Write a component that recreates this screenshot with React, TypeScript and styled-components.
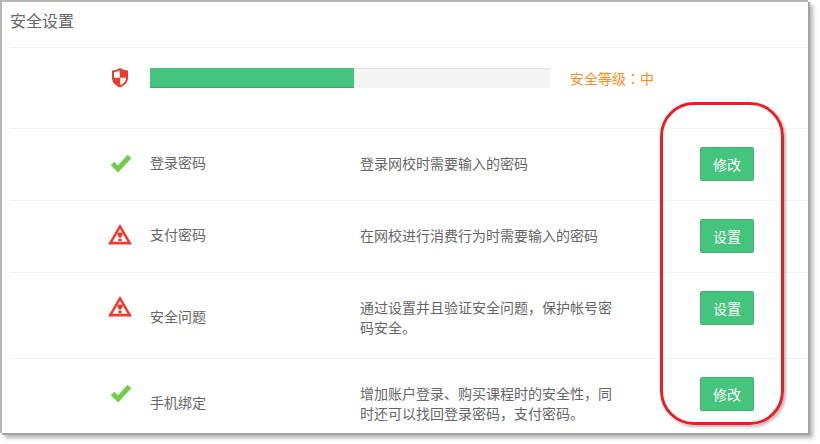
import React from 'react';
import styled, { createGlobalStyle } from 'styled-components';

const GlobalStyle = createGlobalStyle`
  html, body {
    margin: 0;
    padding: 0;
    background: #fff;
    overflow: hidden;
  }
  body {
    font-family: "Noto Sans CJK SC", "Liberation Sans", sans-serif;
  }
`;

const Screen = styled.div`
  position: relative;
  width: 820px;
  height: 444px;
  overflow: hidden;
  background: #fff;
`;

const Panel = styled.section`
  box-sizing: border-box;
  width: 808px;
  height: 433px;
  overflow: hidden;
  background: #fff;
  border-top: 2px solid #b8b5b5;
  border-left: 2px solid #b8b5b5;
  box-shadow: 2px 2px 0 #a3a3a3, 5px 5px 4px #b5b5b5;
  padding-left: 8px;
`;

const Title = styled.h2`
  margin: 0;
  height: 45px;
  line-height: 37px;
  font-size: 16px;
  font-weight: 400;
  color: #666;
  border-bottom: 1px solid #f2f2f2;
`;

const LevelRow = styled.div`
  display: flex;
  align-items: flex-start;
  height: 81px;
  padding-top: 20px;
  box-sizing: border-box;
  border-bottom: 1px solid #f2f2f2;
`;

const IconCell = styled.div<{ $top?: number }>`
  flex: none;
  width: 140px;
  padding-left: 97px;
  padding-top: ${({ $top }) => $top ?? 23}px;
  box-sizing: border-box;
  display: flex;
`;

const Progress = styled.div`
  width: 400px;
  height: 20px;
  background: #f4f4f4;
  box-shadow: inset 0 1px 1px #e2e2e2;
`;

const ProgressFill = styled.div`
  height: 100%;
  box-sizing: border-box;
  background: #44c47c;
  border-bottom: 1px solid #3aa76a;
`;

const LevelText = styled.span`
  margin-left: 20px;
  font-size: 14px;
  line-height: 20px;
  color: #ff8c1a;
`;

const Row = styled.div<{ $height: number }>`
  display: flex;
  align-items: flex-start;
  height: ${({ $height }) => $height}px;
  box-sizing: border-box;
  border-bottom: 1px solid #f2f2f2;
`;

const Name = styled.div<{ $top: number }>`
  flex: none;
  width: 210px;
  padding-top: ${({ $top }) => $top}px;
  font-size: 14px;
  line-height: 20px;
  color: #666;
`;

const Description = styled.div`
  flex: none;
  width: 260px;
  padding-top: 24px;
  font-size: 14px;
  line-height: 20px;
  color: #666;
`;

const Punct = styled.span`
  font-family: "Noto Sans CJK KR", sans-serif;
`;

const ActionButton = styled.button`
  flex: none;
  margin: 18px 0 0 80px;
  width: 54px;
  height: 34px;
  padding: 0;
  font: inherit;
  font-size: 14px;
  color: #fff;
  background: #44c47c;
  border: 1px solid #3db46f;
  border-radius: 2px;
`;

const Highlight = styled.div`
  position: absolute;
  left: 660px;
  top: 102px;
  width: 124px;
  height: 323px;
  box-sizing: border-box;
  border: 3px solid #ee1c25;
  border-radius: 34px;
  box-shadow: 2px 2px 3px rgba(0, 0, 0, 0.28);
`;

const Shield = () => (
  <svg width="26" height="20" viewBox="0 0 26 20">
    <path d="M5 2.500C8 2.300 10.500 1.500 13 0c2.500 1.500 5 2.300 8 2.500V10c0 4.500-3.500 7.500-8 9.500C8.500 17.500 5 14.500 5 10z" fill="#ee3a2c" />
    <path d="M7 4.200C9 4 11 3.400 12.800 2.500v7.300H7zM13.200 9.800H19V10c0 3.400-2.500 5.700-5.800 7.300z" fill="#fff" />
  </svg>
);

const Check = () => (
  <svg width="26" height="22" viewBox="0 0 26 22">
    <path d="M5.500 11.500 11 17 22.500 4.500" fill="none" stroke="#6fcf4b" strokeWidth="5" />
  </svg>
);

const Warning = () => (
  <svg width="26" height="22" viewBox="0 0 26 22">
    <path d="M13 0 25 20.500H1z" fill="#ee3a2c" />
    <path d="M13 5 20.500 17.800H5.500z" fill="#fff" />
    <path d="M10 8.500h6l-1.600 5h-2.800z" fill="#ee3a2c" />
    <rect x="11.500" y="14.500" width="3" height="2.800" fill="#ee3a2c" />
  </svg>
);

const rows = [
  { icon: <Check />, name: '登录密码', desc: <>登录网校时需要输入的密码</>, action: '修改', height: 72, nameTop: 23 },
  { icon: <Warning />, name: '支付密码', desc: <>在网校进行消费行为时需要输入的密码</>, action: '设置', height: 72, nameTop: 23 },
  {
    icon: <Warning />,
    name: '安全问题',
    desc: <>通过设置并且验证安全问题<Punct>，</Punct>保护帐号密码安全<Punct>。</Punct></>,
    action: '设置',
    height: 86,
    nameTop: 33,
  },
  {
    icon: <Check />,
    name: '手机绑定',
    desc: <>增加账户登录<Punct>、</Punct>购买课程时的安全性<Punct>，</Punct>同时还可以找回登录密码<Punct>，</Punct>支付密码<Punct>。</Punct></>,
    action: '修改',
    height: 86,
    nameTop: 33,
  },
];

const App = () => {
  return (
    <Screen>
      <GlobalStyle />
      <Panel>
        <Title>安全设置</Title>
        <LevelRow>
          <IconCell $top={0}>
            <Shield />
          </IconCell>
          <Progress>
            <ProgressFill style={{ width: '51%' }} />
          </Progress>
          <LevelText>安全等级<Punct>：</Punct>中</LevelText>
        </LevelRow>
        {rows.map((row) => (
          <Row key={row.name} $height={row.height}>
            <IconCell>{row.icon}</IconCell>
            <Name $top={row.nameTop}>{row.name}</Name>
            <Description>{row.desc}</Description>
            <ActionButton>{row.action}</ActionButton>
          </Row>
        ))}
      </Panel>
      <Highlight />
    </Screen>
  );
};

export default App;
